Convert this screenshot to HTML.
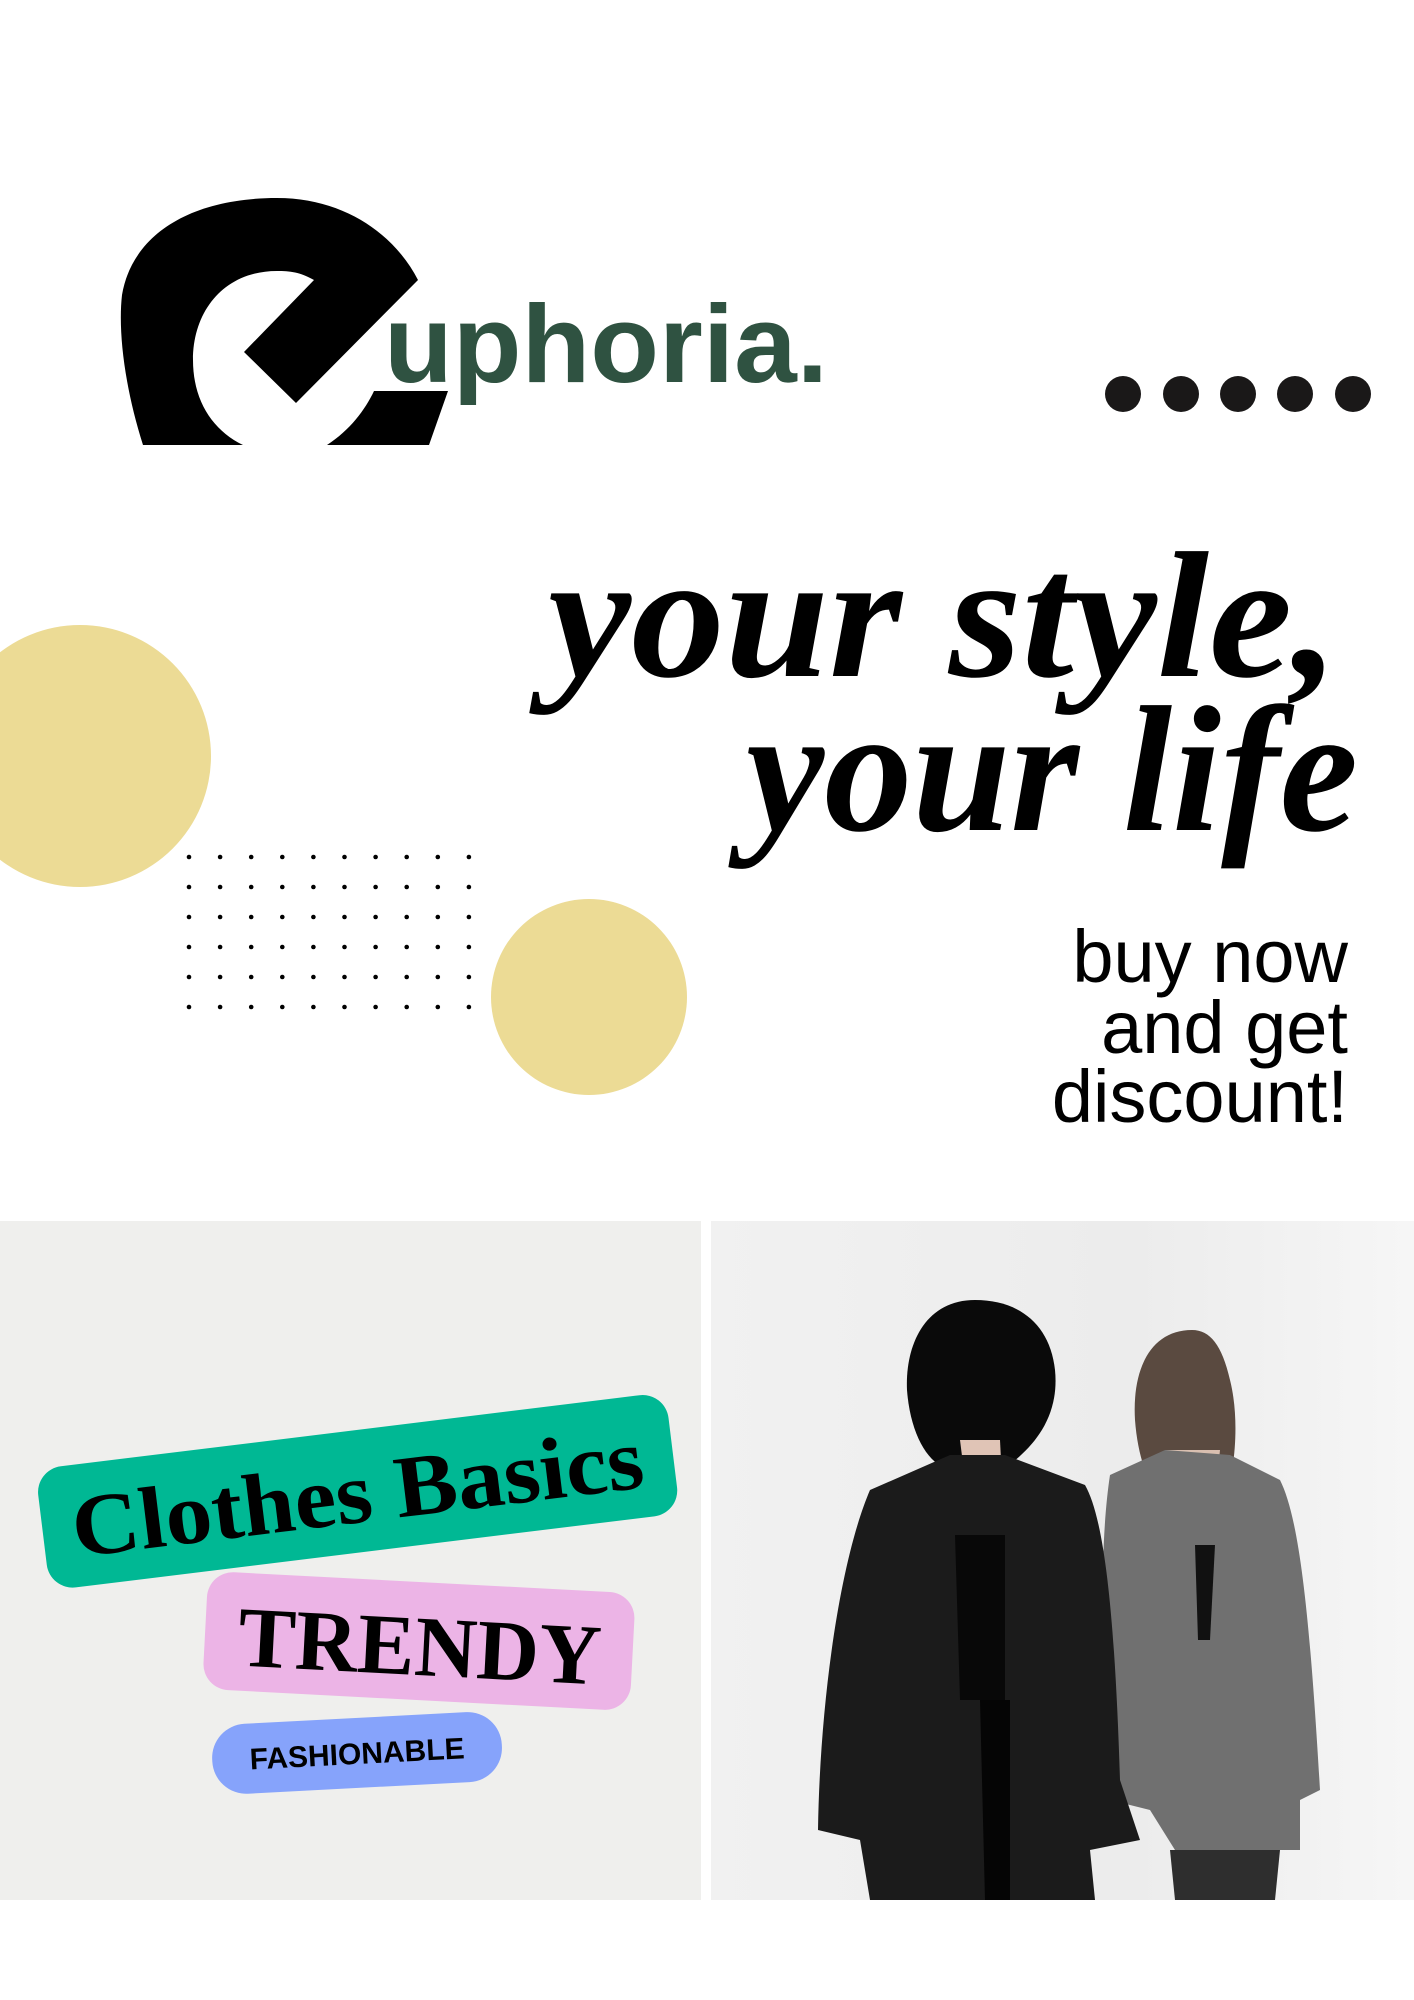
<!DOCTYPE html>
<html><head><meta charset="utf-8"><style>
html,body{margin:0;padding:0;background:#fff;}
body{width:1414px;height:2000px;overflow:hidden;position:relative;font-family:"Liberation Sans",sans-serif;}
svg{position:absolute;left:0;top:0;}
</style></head><body>
<svg width="1414" height="2000" viewBox="0 0 1414 2000" xmlns="http://www.w3.org/2000/svg">
<rect width="1414" height="2000" fill="#fff"/>
<path d="M143 445 C124 385 118 330 122 295 C132 235 190 198 277 198 C345 198 395 235 418 280 L296 403 L244 352 L314 280 C300 272 290 271 277 271 C225 271 193 310 193 360 C193 400 212 430 243 445 Z" fill="#000"/>
<path d="M374 391 L448 391 L429 445 L327 445 C350 430 365 410 374 391 Z" fill="#000"/>
<text x="384" y="382" font-family="Liberation Sans" font-weight="bold" font-size="110" fill="#2f5241" textLength="444" lengthAdjust="spacingAndGlyphs">uphoria.</text>
<g fill="#1a1818">
<circle cx="1123" cy="394" r="18"/><circle cx="1181" cy="394" r="18"/><circle cx="1238" cy="394" r="18"/><circle cx="1295" cy="394" r="18"/><circle cx="1353" cy="394" r="18"/>
</g>
<circle cx="80" cy="756" r="131" fill="#ecdb95"/>
<circle cx="589" cy="997" r="98" fill="#ecdb95"/>
<g fill="#000" id="grid"></g>
<text x="548" y="676" font-family="Liberation Serif" font-style="italic" font-weight="bold" font-size="180" fill="#000" textLength="791" lengthAdjust="spacingAndGlyphs">your style,</text>
<text x="746" y="830" font-family="Liberation Serif" font-style="italic" font-weight="bold" font-size="180" fill="#000" textLength="612" lengthAdjust="spacingAndGlyphs">your life</text>
<g font-family="Liberation Sans" font-size="74" fill="#000" text-anchor="end">
<text x="1348" y="982">buy now</text>
<text x="1348" y="1053">and get</text>
<text x="1348" y="1122">discount!</text>
</g>
<rect x="0" y="1221" width="701" height="679" fill="#efefed"/>
<defs><linearGradient id="bg" x1="0" y1="0" x2="1" y2="0"><stop offset="0" stop-color="#f1f1f1"/><stop offset="0.6" stop-color="#ececec"/><stop offset="1" stop-color="#f6f6f6"/></linearGradient></defs>
<rect x="711" y="1221" width="703" height="679" fill="url(#bg)"/>
<g transform="rotate(-7 360 1490)">
<rect x="40" y="1430" width="635" height="122" rx="26" fill="#00b894"/>
<text x="357" y="1522" text-anchor="middle" font-family="Liberation Serif" font-weight="bold" font-size="88" fill="#000" textLength="575" lengthAdjust="spacingAndGlyphs">Clothes Basics</text>
</g>
<g transform="rotate(3 418 1640)">
<rect x="205" y="1582" width="428" height="118" rx="26" fill="#ecb4e6"/>
<text x="420" y="1675" text-anchor="middle" font-family="Liberation Serif" font-weight="bold" font-size="86" fill="#000">TRENDY</text>
</g>
<g transform="rotate(-3 356 1752)">
<rect x="212" y="1718" width="290" height="70" rx="34" fill="#86a3fb"/>
<text x="357" y="1764" text-anchor="middle" font-family="Liberation Sans" font-weight="bold" font-size="30" fill="#000">FASHIONABLE</text>
</g>
<path d="M1192 1330 C1150 1330 1132 1370 1135 1420 C1138 1460 1150 1490 1165 1500 L1225 1500 C1235 1470 1240 1420 1230 1380 C1222 1345 1210 1330 1192 1330 Z" fill="#5a4a40"/>
<path d="M1165 1450 L1220 1450 L1215 1500 L1170 1500 Z" fill="#d9bfb0"/>
<path d="M1110 1475 L1165 1450 L1230 1455 L1280 1480 C1300 1520 1310 1620 1320 1790 L1300 1800 L1300 1850 L1175 1850 L1150 1810 L1110 1800 C1100 1650 1100 1540 1110 1475 Z" fill="#707070"/>
<path d="M1195 1545 L1215 1545 L1210 1640 L1198 1640 Z" fill="#111"/>
<path d="M1170 1850 L1280 1850 L1275 1900 L1175 1900 Z" fill="#2e2e2e"/>
<path d="M975 1300 C925 1300 905 1345 907 1390 C910 1430 925 1460 945 1468 L1005 1468 C1030 1450 1060 1420 1055 1370 C1050 1325 1020 1300 975 1300 Z" fill="#0a0a0a"/>
<path d="M960 1440 L1000 1440 L1002 1480 L965 1480 Z" fill="#e0c4b6"/>
<path d="M870 1490 L950 1455 L1005 1455 L1085 1485 C1105 1520 1115 1620 1120 1780 L1140 1840 L1090 1850 L1095 1900 L870 1900 L860 1840 L818 1830 C820 1700 840 1560 870 1490 Z" fill="#1b1b1b"/>
<path d="M955 1535 L1005 1535 L1005 1700 L960 1700 Z" fill="#080808"/>
<path d="M980 1700 L1010 1700 L1010 1900 L985 1900 Z" fill="#050505"/>
</svg>
<script>
var g=document.getElementById('grid');var s='';
for(var r=0;r<6;r++)for(var c=0;c<10;c++){s+='<circle cx="'+(189+c*31.1)+'" cy="'+(857+r*30)+'" r="2.3"/>';}
g.innerHTML=s;
</script>
</body></html>
